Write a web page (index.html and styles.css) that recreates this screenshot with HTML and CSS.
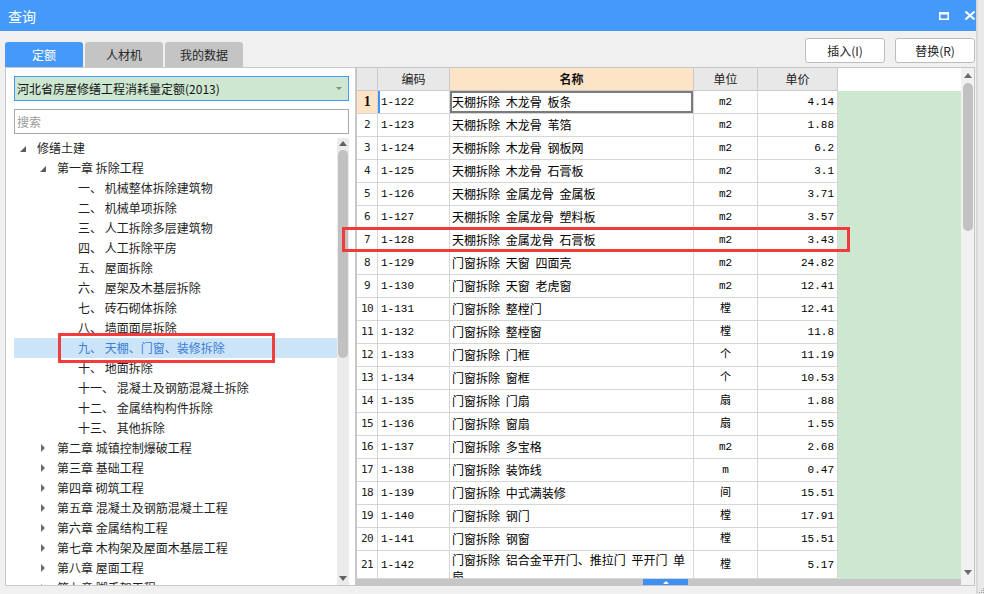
FILE: index.html
```html
<!DOCTYPE html>
<html lang="zh-CN">
<head>
<meta charset="utf-8">
<title>查询</title>
<link rel="stylesheet" href="styles.css">
</head>
<body>
<div class="window">
  <div class="titlebar">
    <span class="title">查询</span>
    <div class="winbtns">
      <svg width="10" height="8" viewBox="0 0 10 8"><path d="M0 0h10v8H0z M1.5 2.5v4h7v-4z" fill="#fff" fill-rule="evenodd"/></svg>
      <svg width="10" height="9" viewBox="0 0 10 9"><path d="M0.5 0.5l9 8M9.5 0.5l-9 8" stroke="#fff" stroke-width="2"/></svg>
    </div>
  </div>

  <div class="toolbar">
    <div class="tabs">
      <div class="tab active">定额</div>
      <div class="tab">人材机</div>
      <div class="tab">我的数据</div>
    </div>
    <div class="actions">
      <div class="btn">插入(I)</div>
      <div class="btn">替换(R)</div>
    </div>
  </div>

  <div class="main">
    <div class="left">
      <div class="combo">
        <span class="combo-label">河北省房屋修缮工程消耗量定额(2013)</span>
        <svg width="6" height="3" viewBox="0 0 6 3"><path d="M0 0h6L3 3z" fill="#8a8a8a"/></svg>
      </div>
      <div class="search">搜索</div>
      <div class="tree">
        <div class="tree-list">
          <div class="node l0"><span class="toggle"><svg width="6" height="6" viewBox="0 0 6 6"><path d="M6 0v6H0z" fill="#5c5c5c"/></svg></span>修缮土建</div>
          <div class="node l1"><span class="toggle"><svg width="6" height="6" viewBox="0 0 6 6"><path d="M6 0v6H0z" fill="#5c5c5c"/></svg></span>第一章 拆除工程</div>
          <div class="node l2"><span class="toggle"></span>一、 机械整体拆除建筑物</div>
          <div class="node l2"><span class="toggle"></span>二、 机械单项拆除</div>
          <div class="node l2"><span class="toggle"></span>三、 人工拆除多层建筑物</div>
          <div class="node l2"><span class="toggle"></span>四、 人工拆除平房</div>
          <div class="node l2"><span class="toggle"></span>五、 屋面拆除</div>
          <div class="node l2"><span class="toggle"></span>六、 屋架及木基层拆除</div>
          <div class="node l2"><span class="toggle"></span>七、 砖石砌体拆除</div>
          <div class="node l2"><span class="toggle"></span>八、 墙面面层拆除</div>
          <div class="node l2 selected"><span class="toggle"></span>九、 天棚、门窗、装修拆除<span class="mark-tree"></span></div>
          <div class="node l2"><span class="toggle"></span>十、 地面拆除</div>
          <div class="node l2"><span class="toggle"></span>十一、 混凝土及钢筋混凝土拆除</div>
          <div class="node l2"><span class="toggle"></span>十二、 金属结构构件拆除</div>
          <div class="node l2"><span class="toggle"></span>十三、 其他拆除</div>
          <div class="node l1"><span class="toggle"><svg class="closed" width="4" height="8" viewBox="0 0 4 8"><path d="M0 0l4 4-4 4z" fill="#6a6a6a"/></svg></span>第二章 城镇控制爆破工程</div>
          <div class="node l1"><span class="toggle"><svg class="closed" width="4" height="8" viewBox="0 0 4 8"><path d="M0 0l4 4-4 4z" fill="#6a6a6a"/></svg></span>第三章 基础工程</div>
          <div class="node l1"><span class="toggle"><svg class="closed" width="4" height="8" viewBox="0 0 4 8"><path d="M0 0l4 4-4 4z" fill="#6a6a6a"/></svg></span>第四章 砌筑工程</div>
          <div class="node l1"><span class="toggle"><svg class="closed" width="4" height="8" viewBox="0 0 4 8"><path d="M0 0l4 4-4 4z" fill="#6a6a6a"/></svg></span>第五章 混凝土及钢筋混凝土工程</div>
          <div class="node l1"><span class="toggle"><svg class="closed" width="4" height="8" viewBox="0 0 4 8"><path d="M0 0l4 4-4 4z" fill="#6a6a6a"/></svg></span>第六章 金属结构工程</div>
          <div class="node l1"><span class="toggle"><svg class="closed" width="4" height="8" viewBox="0 0 4 8"><path d="M0 0l4 4-4 4z" fill="#6a6a6a"/></svg></span>第七章 木构架及屋面木基层工程</div>
          <div class="node l1"><span class="toggle"><svg class="closed" width="4" height="8" viewBox="0 0 4 8"><path d="M0 0l4 4-4 4z" fill="#6a6a6a"/></svg></span>第八章 屋面工程</div>
          <div class="node l1"><span class="toggle"><svg class="closed" width="4" height="8" viewBox="0 0 4 8"><path d="M0 0l4 4-4 4z" fill="#6a6a6a"/></svg></span>第九章 脚手架工程</div>
        </div>
        <div class="vscroll tree-scroll">
          <svg class="arr-up" width="8" height="5" viewBox="0 0 8 5"><path d="M0 5L4 0l4 5z" fill="#616161"/></svg>
          <div class="thumb"></div>
          <svg class="arr-down" width="8" height="5" viewBox="0 0 8 5"><path d="M0 0h8L4 5z" fill="#616161"/></svg>
        </div>
      </div>
    </div>

    <div class="grid">
      <div class="table">
        <div class="row head">
          <div class="cell num-h"></div>
          <div class="cell">编码</div>
          <div class="cell sel">名称</div>
          <div class="cell">单位</div>
          <div class="cell">单价</div>
          <div class="cell fill"></div>
        </div>
        <div class="row"><div class="cell num cur">1</div><div class="cell code cur">1-122</div><div class="cell name focus">天棚拆除 木龙骨 板条</div><div class="cell unit">m2</div><div class="cell price">4.14</div><div class="cell fill"></div></div>
        <div class="row"><div class="cell num">2</div><div class="cell code">1-123</div><div class="cell name">天棚拆除 木龙骨 苇箔</div><div class="cell unit">m2</div><div class="cell price">1.88</div><div class="cell fill"></div></div>
        <div class="row"><div class="cell num">3</div><div class="cell code">1-124</div><div class="cell name">天棚拆除 木龙骨 钢板网</div><div class="cell unit">m2</div><div class="cell price">6.2</div><div class="cell fill"></div></div>
        <div class="row"><div class="cell num">4</div><div class="cell code">1-125</div><div class="cell name">天棚拆除 木龙骨 石膏板</div><div class="cell unit">m2</div><div class="cell price">3.1</div><div class="cell fill"></div></div>
        <div class="row"><div class="cell num">5</div><div class="cell code">1-126</div><div class="cell name">天棚拆除 金属龙骨 金属板</div><div class="cell unit">m2</div><div class="cell price">3.71</div><div class="cell fill"></div></div>
        <div class="row"><div class="cell num">6</div><div class="cell code">1-127</div><div class="cell name">天棚拆除 金属龙骨 塑料板</div><div class="cell unit">m2</div><div class="cell price">3.57</div><div class="cell fill"></div></div>
        <div class="row marked"><div class="cell num">7</div><div class="cell code">1-128</div><div class="cell name">天棚拆除 金属龙骨 石膏板</div><div class="cell unit">m2</div><div class="cell price">3.43</div><div class="cell fill"></div><span class="mark-row"></span></div>
        <div class="row"><div class="cell num">8</div><div class="cell code">1-129</div><div class="cell name">门窗拆除 天窗 四面亮</div><div class="cell unit">m2</div><div class="cell price">24.82</div><div class="cell fill"></div></div>
        <div class="row"><div class="cell num">9</div><div class="cell code">1-130</div><div class="cell name">门窗拆除 天窗 老虎窗</div><div class="cell unit">m2</div><div class="cell price">12.41</div><div class="cell fill"></div></div>
        <div class="row"><div class="cell num">10</div><div class="cell code">1-131</div><div class="cell name">门窗拆除 整樘门</div><div class="cell unit">樘</div><div class="cell price">12.41</div><div class="cell fill"></div></div>
        <div class="row"><div class="cell num">11</div><div class="cell code">1-132</div><div class="cell name">门窗拆除 整樘窗</div><div class="cell unit">樘</div><div class="cell price">11.8</div><div class="cell fill"></div></div>
        <div class="row"><div class="cell num">12</div><div class="cell code">1-133</div><div class="cell name">门窗拆除 门框</div><div class="cell unit">个</div><div class="cell price">11.19</div><div class="cell fill"></div></div>
        <div class="row"><div class="cell num">13</div><div class="cell code">1-134</div><div class="cell name">门窗拆除 窗框</div><div class="cell unit">个</div><div class="cell price">10.53</div><div class="cell fill"></div></div>
        <div class="row"><div class="cell num">14</div><div class="cell code">1-135</div><div class="cell name">门窗拆除 门扇</div><div class="cell unit">扇</div><div class="cell price">1.88</div><div class="cell fill"></div></div>
        <div class="row"><div class="cell num">15</div><div class="cell code">1-136</div><div class="cell name">门窗拆除 窗扇</div><div class="cell unit">扇</div><div class="cell price">1.55</div><div class="cell fill"></div></div>
        <div class="row"><div class="cell num">16</div><div class="cell code">1-137</div><div class="cell name">门窗拆除 多宝格</div><div class="cell unit">m2</div><div class="cell price">2.68</div><div class="cell fill"></div></div>
        <div class="row"><div class="cell num">17</div><div class="cell code">1-138</div><div class="cell name">门窗拆除 装饰线</div><div class="cell unit">m</div><div class="cell price">0.47</div><div class="cell fill"></div></div>
        <div class="row"><div class="cell num">18</div><div class="cell code">1-139</div><div class="cell name">门窗拆除 中式满装修</div><div class="cell unit">间</div><div class="cell price">15.51</div><div class="cell fill"></div></div>
        <div class="row"><div class="cell num">19</div><div class="cell code">1-140</div><div class="cell name">门窗拆除 钢门</div><div class="cell unit">樘</div><div class="cell price">17.91</div><div class="cell fill"></div></div>
        <div class="row"><div class="cell num">20</div><div class="cell code">1-141</div><div class="cell name">门窗拆除 钢窗</div><div class="cell unit">樘</div><div class="cell price">15.51</div><div class="cell fill"></div></div>
        <div class="row tall"><div class="cell num">21</div><div class="cell code">1-142</div><div class="cell name">门窗拆除 铝合金平开门、推拉门 平开门 单<br>扇</div><div class="cell unit">樘</div><div class="cell price">5.17</div><div class="cell fill"></div></div>
        <div class="hbar"><div class="hbar-handle"><svg width="6" height="3" viewBox="0 0 6 3"><path d="M0 3L3 0l3 3z" fill="#fff"/></svg></div></div>
      </div>
      <div class="vscroll grid-scroll">
        <svg class="arr-up" width="8" height="5" viewBox="0 0 8 5"><path d="M0 5L4 0l4 5z" fill="#6b6b6b"/></svg>
        <div class="thumb"></div>
        <svg class="arr-down" width="8" height="5" viewBox="0 0 8 5"><path d="M0 0h8L4 5z" fill="#6b6b6b"/></svg>
      </div>
    </div>
  </div>
</div>
<div class="strip">
  <svg width="7" height="7" viewBox="0 0 7 7"><g fill="#9a9a9a"><rect x="5" y="1" width="1" height="1"/><rect x="3" y="3" width="1" height="1"/><rect x="5" y="3" width="1" height="1"/><rect x="1" y="5" width="1" height="1"/><rect x="3" y="5" width="1" height="1"/><rect x="5" y="5" width="1" height="1"/></g></svg>
</div>
</body>
</html>
```

FILE: styles.css
```css
* { box-sizing: border-box; }

body {
  margin: 0;
  width: 984px;
  height: 594px;
  display: flex;
  overflow: hidden;
  background: #f0f0f0;
  font-family: "Noto Sans CJK SC", "Noto Sans", sans-serif;
  font-size: 12px;
  line-height: 16px;
  color: #1e1e1e;
}

.window {
  width: 976px;
  height: 594px;
  display: flex;
  flex-direction: column;
  background: #f0f0f0;
}

.strip {
  flex: 1;
  background: #e9e9e9;
  border-left: 2px solid #d9d9d9;
  display: flex;
  align-items: flex-end;
  justify-content: flex-end;
}

/* title bar */
.titlebar {
  height: 31px;
  flex-shrink: 0;
  background: #4499fb;
  color: #fff;
  display: flex;
  align-items: center;
  padding: 0 1px 0 8px;
  font-size: 14px;
}
.title { flex: 1; }
.winbtns {
  display: flex;
  align-items: center;
  gap: 16px;
}
.winbtns svg { display: block; }

/* toolbar */
.toolbar {
  height: 36px;
  flex-shrink: 0;
  display: flex;
  align-items: flex-end;
  padding: 0 1px 0 5px;
}
.tabs { display: flex; gap: 2px; }
.tab {
  width: 78px;
  height: 25px;
  display: flex;
  align-items: center;
  justify-content: center;
  background: #c4c4c4;
  color: #262626;
  border-radius: 3px 3px 0 0;
}
.tab.active { background: #4499fb; color: #fff; }

.actions {
  margin-left: auto;
  align-self: flex-start;
  margin-top: 7px;
  display: flex;
  gap: 10px;
}
.btn {
  width: 80px;
  height: 25px;
  border: 1px solid #bdbdbd;
  border-radius: 3px;
  background: #fff;
  display: flex;
  align-items: center;
  justify-content: center;
  color: #222;
}

/* main */
.main {
  flex: 1;
  min-height: 0;
  display: flex;
  padding: 0 1px 8px 5px;
}

.left {
  width: 351px;
  border: 1px solid #c9c9c9;
  background: #fff;
  display: flex;
  flex-direction: column;
  padding: 8px 6px 0 8px;
}
.combo {
  height: 25px;
  flex-shrink: 0;
  border: 1px solid #4499fb;
  background: #cde7d1;
  display: flex;
  align-items: center;
  padding: 0 6px 0 2px;
  color: #151515;
}
.combo-label { flex: 1; }
.search {
  margin-top: 8px;
  height: 25px;
  flex-shrink: 0;
  border: 1px solid #a9a9a9;
  display: flex;
  align-items: center;
  padding-left: 2px;
  color: #9b9b9b;
}
.tree {
  margin-top: 4px;
  flex: 1;
  min-height: 0;
  display: flex;
}
.tree-list {
  flex: 1;
  overflow: hidden;
}
.node {
  height: 20px;
  display: flex;
  align-items: center;
  padding-left: 6px;
  white-space: nowrap;
  color: #1e1e1e;
}
.node.l1 { padding-left: 26px; }
.node.l2 { padding-left: 47px; }
.toggle {
  width: 17px;
  height: 20px;
  flex-shrink: 0;
  display: flex;
  align-items: center;
  padding-top: 2px;
}
.toggle .closed { margin-left: 1px; margin-top: -2px; }
.node.selected {
  position: relative;
  background: #cce4f7;
  color: #3b7ed6;
}
.mark-tree {
  position: absolute;
  left: 44px;
  top: -5px;
  width: 217px;
  height: 30px;
  border: 3px solid #f23b3b;
}

/* scrollbars */
.vscroll {
  flex-shrink: 0;
  display: flex;
  flex-direction: column;
  align-items: center;
}
.vscroll svg { display: block; }
.vscroll .thumb {
  width: 10px;
  background: #c1c1c1;
  border-radius: 5px;
}
.vscroll .arr-down { margin-top: auto; }

.tree-scroll {
  width: 12px;
  background: #ebebeb;
}
.tree-scroll .arr-up { margin-top: 3px; }
.tree-scroll .thumb { margin-top: 4px; height: 208px; }
.tree-scroll .arr-down { margin-bottom: 4px; }

.grid-scroll {
  width: 13px;
  background: #f1f1f1;
}
.grid-scroll .arr-up { margin-top: 5px; }
.grid-scroll .thumb { margin-top: 5px; height: 148px; }
.grid-scroll .arr-down { margin-bottom: 10px; }

/* grid */
.grid {
  width: 619px;
  border: 1px solid #c6c6c6;
  background: #fff;
  display: flex;
}
.table {
  flex: 1;
  display: flex;
  flex-direction: column;
}
.row {
  display: grid;
  grid-template-columns: 21px 72px 244px 64px 80px 1fr;
  height: 23px;
  flex-shrink: 0;
  color: #000;
}
.row.marked { position: relative; }
.cell {
  border-right: 1px solid #d6d6d6;
  border-bottom: 1px solid #d6d6d6;
  display: flex;
  align-items: center;
  overflow: hidden;
  white-space: nowrap;
}
.head .cell {
  background: #e8e8e8;
  justify-content: center;
  border-color: #cacaca;
  color: #222;
}
.head .cell.sel {
  background: #fde4c6;
  font-weight: bold;
  color: #111;
}
.head .cell.fill { background: #fff; border: none; }
.cell.fill { background: #cde7d1; border: none; }

.num {
  justify-content: center;
  font-family: "DejaVu Sans Mono", monospace;
  font-size: 11px;
  letter-spacing: -0.5px;
  color: #222;
}
.num.cur {
  background: #fde4c6;
  font-family: "Liberation Serif", serif;
  font-weight: bold;
  font-size: 14px;
  color: #111;
}
.code {
  padding-left: 3px;
  font-family: "Liberation Mono", monospace;
  font-size: 11px;
}
.code.cur { box-shadow: inset 2px 0 0 #3d95f5; }
.name {
  padding-left: 2px;
  word-spacing: 3px;
}
.name.focus { box-shadow: inset 0 0 0 2px #7b7b7b; }
.unit {
  justify-content: center;
  font-family: "Liberation Mono", "Noto Sans CJK SC", monospace;
  font-size: 11px;
}
.price {
  justify-content: flex-end;
  padding-right: 3px;
  font-family: "Liberation Mono", monospace;
  font-size: 11px;
}
.row.tall { height: 28px; }
.row.tall .name {
  align-items: flex-start;
  white-space: normal;
  line-height: 17px;
  padding-top: 0;
}
.mark-row {
  position: absolute;
  left: -15px;
  top: -2px;
  width: 508px;
  height: 25px;
  border: 3px solid #f03b3b;
}

.hbar {
  height: 6px;
  flex-shrink: 0;
  background: #c6c6c6;
  display: flex;
}
.hbar-handle {
  margin-left: 286px;
  width: 45px;
  height: 6px;
  background: #3d90f2;
  display: flex;
  align-items: center;
  justify-content: center;
}
.hbar-handle svg { display: block; }
```
